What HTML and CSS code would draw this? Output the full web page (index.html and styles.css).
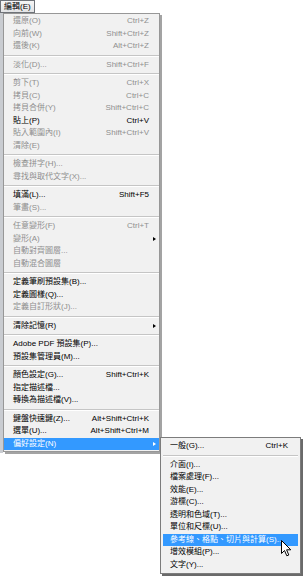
FILE: index.html
```html
<!DOCTYPE html>
<html lang="zh-Hant">
<head>
  <meta charset="UTF-8">
  <meta name="viewport" content="width=device-width, initial-scale=1.0">
  <title>編輯選單</title>
  <link rel="stylesheet" href="styles.css">
</head>
<body>
  <div class="menubar">
    <span class="menu-title">編輯(E)</span>
  </div>

  <div class="popups">
    <div class="edge"></div>

    <ul class="menu main">
      <li class="item off"><span>還原(O)</span><span class="key">Ctrl+Z</span></li>
      <li class="item off"><span>向前(W)</span><span class="key">Shift+Ctrl+Z</span></li>
      <li class="item off"><span>還後(K)</span><span class="key">Alt+Ctrl+Z</span></li>
      <li class="sep"></li>
      <li class="item off"><span>淡化(D)...</span><span class="key">Shift+Ctrl+F</span></li>
      <li class="sep"></li>
      <li class="item off"><span>剪下(T)</span><span class="key">Ctrl+X</span></li>
      <li class="item off"><span>拷貝(C)</span><span class="key">Ctrl+C</span></li>
      <li class="item off"><span>拷貝合併(Y)</span><span class="key">Shift+Ctrl+C</span></li>
      <li class="item"><span>貼上(P)</span><span class="key">Ctrl+V</span></li>
      <li class="item off"><span>貼入範圍內(I)</span><span class="key">Shift+Ctrl+V</span></li>
      <li class="item off"><span>清除(E)</span></li>
      <li class="sep"></li>
      <li class="item off"><span>檢查拼字(H)...</span></li>
      <li class="item off"><span>尋找與取代文字(X)...</span></li>
      <li class="sep"></li>
      <li class="item"><span>填滿(L)...</span><span class="key">Shift+F5</span></li>
      <li class="item off"><span>筆畫(S)...</span></li>
      <li class="sep"></li>
      <li class="item off"><span>任意變形(F)</span><span class="key">Ctrl+T</span></li>
      <li class="item off"><span>變形(A)</span><span class="key"></span><span class="arrow"></span></li>
      <li class="item off"><span>自動對齊圖層...</span></li>
      <li class="item off"><span>自動混合圖層</span></li>
      <li class="sep"></li>
      <li class="item"><span>定義筆刷預設集(B)...</span></li>
      <li class="item"><span>定義圖樣(Q)...</span></li>
      <li class="item off"><span>定義自訂形狀(J)...</span></li>
      <li class="sep"></li>
      <li class="item"><span>清除記憶(R)</span><span class="key"></span><span class="arrow"></span></li>
      <li class="sep"></li>
      <li class="item"><span>Adobe PDF 預設集(P)...</span></li>
      <li class="item"><span>預設集管理員(M)...</span></li>
      <li class="sep"></li>
      <li class="item"><span>顏色設定(G)...</span><span class="key">Shift+Ctrl+K</span></li>
      <li class="item"><span>指定描述檔...</span></li>
      <li class="item"><span>轉換為描述檔(V)...</span></li>
      <li class="sep"></li>
      <li class="item"><span>鍵盤快速鍵(Z)...</span><span class="key">Alt+Shift+Ctrl+K</span></li>
      <li class="item"><span>選單(U)...</span><span class="key">Alt+Shift+Ctrl+M</span></li>
      <li class="item active"><span>偏好設定(N)</span><span class="key"></span><span class="arrow"></span></li>
    </ul>

    <ul class="menu sub">
      <li class="item"><span>一般(G)...</span><span class="key">Ctrl+K</span></li>
      <li class="sep"></li>
      <li class="item"><span>介面(I)...</span></li>
      <li class="item"><span>檔案處理(F)...</span></li>
      <li class="item"><span>效能(E)...</span></li>
      <li class="item"><span>游標(C)...</span></li>
      <li class="item"><span>透明和色域(T)...</span></li>
      <li class="item"><span>單位和尺標(U)...</span></li>
      <li class="item active"><span>參考線、格點、切片與計算(S)...</span></li>
      <li class="item"><span>增效模組(P)...</span></li>
      <li class="item"><span>文字(Y)...</span></li>
    </ul>

    <svg class="cursor" width="11" height="17" viewBox="0 0 11 17">
      <path d="M0.5 0.5 L0.5 13.5 L3.5 10.5 L5.8 15.8 L7.8 15 L5.6 9.8 L9.8 9.8 Z" fill="#fff" stroke="#000" stroke-width="1" stroke-linejoin="round"/>
    </svg>
  </div>
</body>
</html>
```

FILE: styles.css
```css
body {
  margin: 0;
  padding: 0;
  background: #ffffff;
  font-family: "Liberation Sans", "Noto Sans CJK TC", sans-serif;
  font-size: 8px;
  color: #000000;
  width: 304px;
  height: 577px;
  overflow: hidden;
}

.menubar {
  height: 13px;
  display: flex;
}

.menu-title {
  box-sizing: border-box;
  width: 35px;
  height: 13px;
  line-height: 11px;
  padding-left: 3px;
  border: 1px solid #6f7379;
  background: linear-gradient(#f6f6f6, #e2e3e5);
}

.popups {
  position: relative;
  display: flex;
  align-items: flex-start;
}

.edge {
  width: 3px;
  height: 440px;
  background: #c9ccd1;
}

.menu {
  list-style: none;
  margin: 0;
  background: #f1f1f1;
  border: 1px solid #979797;
}

.main {
  box-sizing: border-box;
  width: 157px;
  padding: 1px 0;
  box-shadow: 2px 2px 0 #a3a3a3;
}

.sub {
  box-sizing: border-box;
  width: 141px;
  margin-top: 424px;
  padding: 2px 2px;
  border-color: #7c7c7c;
  box-shadow: 2px 2px 0 #6a6a6a;
}

.item {
  display: grid;
  grid-template-columns: 1fr auto 10px;
  height: 12.5px;
  line-height: 12.5px;
  padding-left: 9px;
  white-space: nowrap;
}

.sub .item {
  padding-left: 7px;
  padding-right: 0;
}

.item.off {
  color: #8f8f8f;
}

.active {
  background: #3399ff;
  color: #ffffff;
}

.arrow {
  justify-self: center;
  align-self: center;
  width: 0;
  height: 0;
  border-top: 2.5px solid transparent;
  border-bottom: 2.5px solid transparent;
  border-left: 3px solid #000000;
}

.active .arrow {
  border-left-color: #ffffff;
}

.sep {
  height: 6px;
  display: flex;
  align-items: center;
}

.sep::before {
  content: "";
  display: block;
  width: 100%;
  border-top: 1px solid #c5c5c5;
  border-bottom: 1px solid #ffffff;
}

.cursor {
  position: absolute;
  left: 281px;
  top: 527px;
}
```
